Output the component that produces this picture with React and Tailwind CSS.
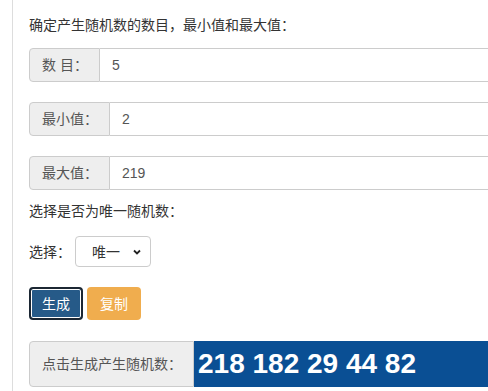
import React from "react";

const font = { fontFamily: '"Liberation Sans", "Noto Sans CJK SC", sans-serif' };

function InputGroup({ label, value, labelWidth }) {
    return (
        <div className="flex h-[34px] w-[520px] text-sm">
            <div className={"flex items-center pl-3 bg-[#eee] border border-[#ccc] rounded-l text-[#555] " + labelWidth}>
                {label}
            </div>
            <div className="flex-1 flex items-center pl-3 border border-l-0 border-[#ccc] text-[#555]">
                {value}
            </div>
        </div>
    );
}

export default function App() {
    return (
        <div className="w-[488px] h-[391px] overflow-hidden bg-white text-[#333]" style={font}>
            <div className="ml-3 h-full border-l border-[#ddd] pl-4 pt-[15px]">
                <p className="text-sm leading-5">确定产生随机数的数目，最小值和最大值：</p>
                <div className="mt-[13px] flex flex-col gap-5">
                    <InputGroup label="数 目：" value="5" labelWidth="w-[71px]" />
                    <InputGroup label="最小值：" value="2" labelWidth="w-[81px]" />
                    <InputGroup label="最大值：" value="219" labelWidth="w-[81px]" />
                </div>
                <p className="mt-[11px] text-sm leading-5">选择是否为唯一随机数：</p>
                <div className="mt-[15px] flex items-center gap-1 text-sm">
                    <span>选择：</span>
                    <div className="flex items-center justify-between w-[76px] h-[31px] pl-4 pr-2 border border-[#ccc] rounded bg-white">
                        <span>唯一</span>
                        <svg width="10" height="10" viewBox="0 0 10 10">
                            <path d="M2 3.5 L5 6.5 L8 3.5" fill="none" stroke="#222" strokeWidth="1.8" />
                        </svg>
                    </div>
                </div>
                <div className="mt-5 flex gap-1 text-sm">
                    <button className="h-[33px] w-[54px] rounded border-2 border-[#1c2733] bg-[#265a88] text-white shadow-[inset_0_0_0_1px_#fff]">
                        生成
                    </button>
                    <button className="h-[33px] w-[54px] rounded bg-[#f0ad4e] text-white">
                        复制
                    </button>
                </div>
                <div className="mt-[21px] flex h-[46px] w-[520px]">
                    <div className="flex items-center w-[165px] pl-3 bg-[#eee] border border-[#ccc] rounded-l text-sm text-[#555]">
                        点击生成产生随机数：
                    </div>
                    <div className="flex-1 flex items-center pl-1 bg-[#0a4f94] text-white text-[28px] font-bold">
                        218 182 29 44 82
                    </div>
                </div>
            </div>
        </div>
    );
}
